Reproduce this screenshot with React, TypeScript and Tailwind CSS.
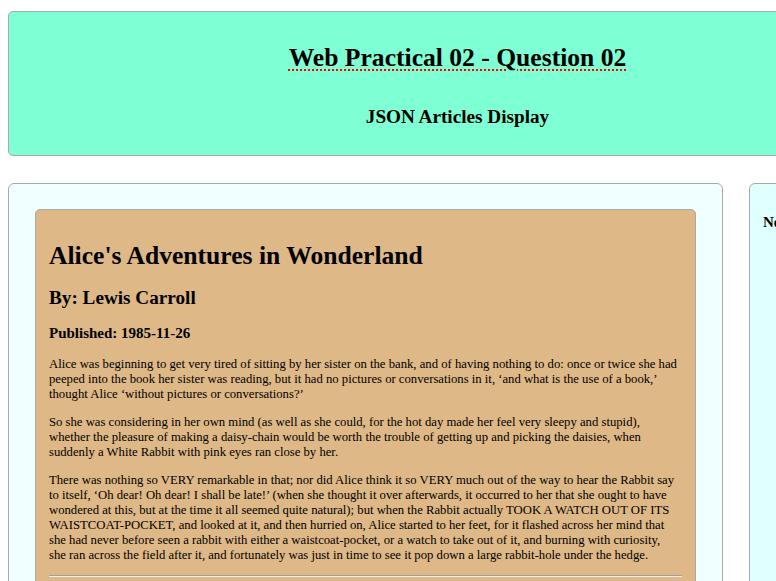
import React from 'react'

interface Article {
  title: string
  author: string
  published: string
  paragraphs: string[]
}

const ARTICLES: Article[] = [
  {
    title: "Alice's Adventures in Wonderland",
    author: 'Lewis Carroll',
    published: '1985-11-26',
    paragraphs: [
      'Alice was beginning to get very tired of sitting by her sister on the bank, and of having nothing to do: once or twice she had peeped into the book her sister was reading, but it had no pictures or conversations in it, ‘and what is the use of a book,’ thought Alice ‘without pictures or conversations?’',
      'So she was considering in her own mind (as well as she could, for the hot day made her feel very sleepy and stupid), whether the pleasure of making a daisy-chain would be worth the trouble of getting up and picking the daisies, when suddenly a White Rabbit with pink eyes ran close by her.',
      'There was nothing so VERY remarkable in that; nor did Alice think it so VERY much out of the way to hear the Rabbit say to itself, ‘Oh dear! Oh dear! I shall be late!’ (when she thought it over afterwards, it occurred to her that she ought to have wondered at this, but at the time it all seemed quite natural); but when the Rabbit actually TOOK A WATCH OUT OF ITS WAISTCOAT-POCKET, and looked at it, and then hurried on, Alice started to her feet, for it flashed across her mind that she had never before seen a rabbit with either a waistcoat-pocket, or a watch to take out of it, and burning with curiosity, she ran across the field after it, and fortunately was just in time to see it pop down a large rabbit-hole under the hedge.',
    ],
  },
]

function ArticleCard({ article }: { article: Article }) {
  return (
    <div className="rounded-[5px] border border-[#a9a9a9] bg-[#deb887] pl-[13px] pr-[16px] pt-[14px] pb-[13px]">
      <h1 className="mt-[17px] text-[25.6px] font-bold leading-[29px]">{article.title}</h1>
      <h2 className="mt-[17px] text-[19.2px] font-bold leading-[22px]">By: {article.author}</h2>
      <h3 className="mt-[16px] text-[15px] font-bold leading-[17px]">Published: {article.published}</h3>
      {article.paragraphs.map((p, i) => (
        <p key={i} className={`${i === 0 ? 'mt-[15px]' : 'mt-[13px]'} text-[12.7px] leading-[15px]`}>
          {p}
        </p>
      ))}
      <hr className="mt-[12px] -mr-[3px] border-t border-b border-t-[#a0a0a0] border-b-[#eeeeee]" />
    </div>
  )
}

export default function App() {
  return (
    <div className="h-screen w-screen overflow-hidden bg-white pt-[11px] pl-[8px] text-black font-['Liberation_Serif','Times_New_Roman',serif]">
      <header className="w-[899px] rounded-[5px] border border-[#a9a9a9] bg-[#7fffd4] px-[13px] pt-[31px] pb-[27px] text-center">
        <h1 className="text-[25.6px] font-bold leading-[29px]">
          <span className="underline decoration-dotted decoration-[#ff0000] decoration-2 underline-offset-[3px]">
            Web Practical 02 - Question 02
          </span>
        </h1>
        <h2 className="mt-[34px] text-[19.2px] font-bold leading-[22px]">JSON Articles Display</h2>
      </header>

      <main className="mt-[27px] flex w-[899px] items-start gap-[26px]">
        <section className="w-[715px] shrink-0 rounded-[6px] border border-[#a9a9a9] bg-[#f0ffff] px-[26px] pt-[25px] pb-[25px]">
          <div className="space-y-[13px]">
            {ARTICLES.map((a) => (
              <ArticleCard key={a.title} article={a} />
            ))}
          </div>
        </section>

        <aside className="min-h-[500px] flex-1 rounded-[6px] border border-[#a9a9a9] bg-[#e0ffff] p-[13px]">
          <h3 className="mt-[17px] text-[15px] font-bold leading-[17px]">News</h3>
        </aside>
      </main>
    </div>
  )
}
